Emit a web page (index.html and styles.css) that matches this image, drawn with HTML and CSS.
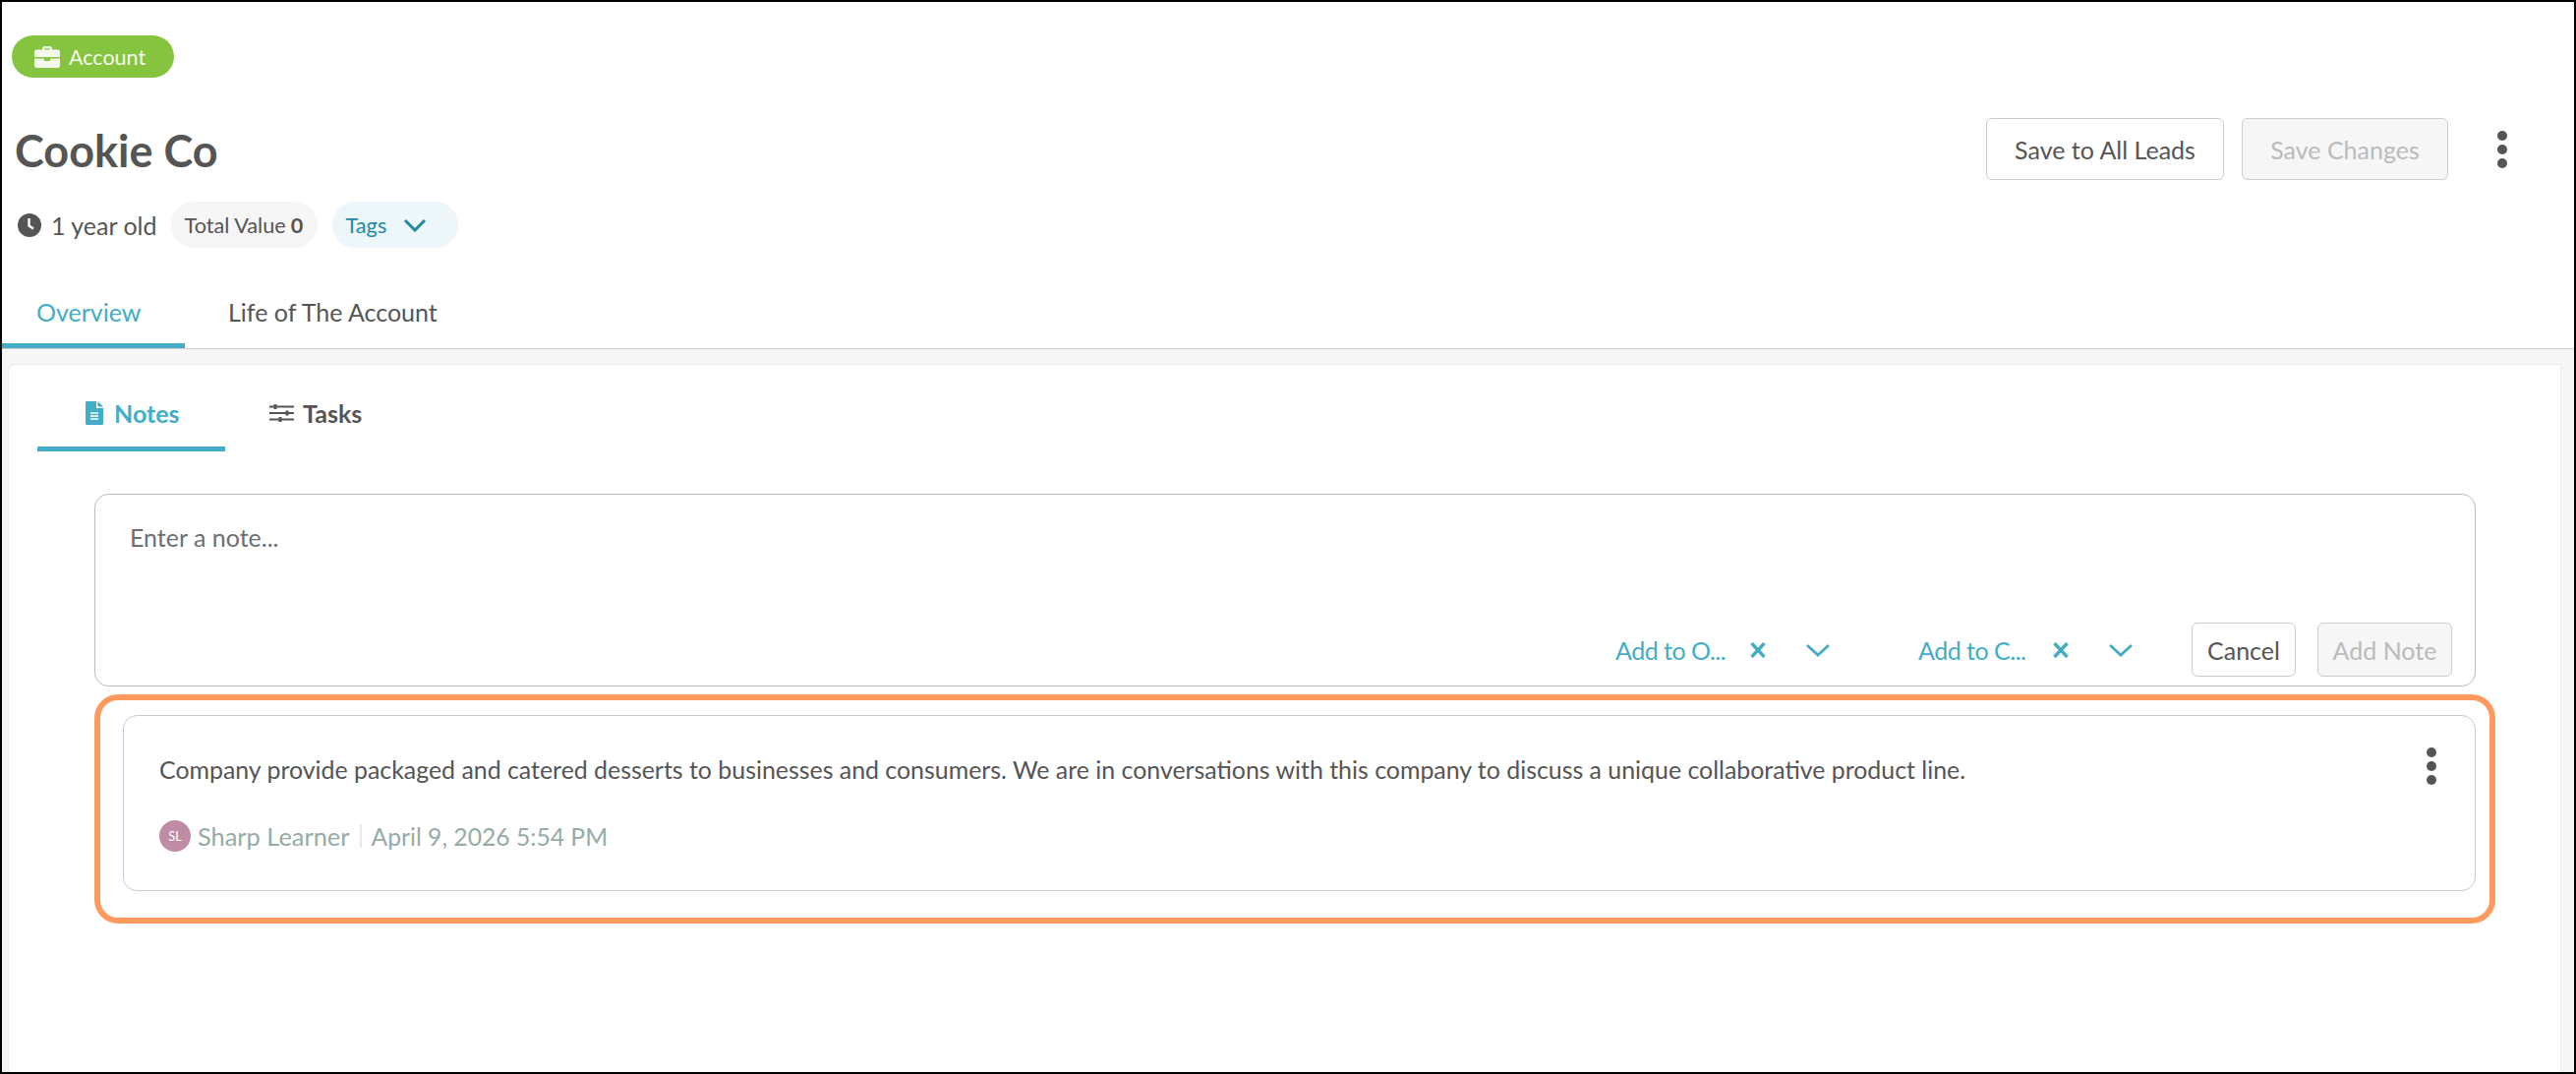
FILE: index.html
```html
<!DOCTYPE html>
<html lang="en">
<head>
<meta charset="utf-8">
<title>Cookie Co</title>
<link rel="stylesheet" href="styles.css">
</head>
<body>
<div class="frame">
  <header class="head">
    <div class="pill">
      <svg class="ic-case" viewBox="0 0 26 22"><path fill-rule="evenodd" d="M8 4V2.2C8 1 9 0 10.2 0h5.6C17 0 18 1 18 2.2V4h-2.2V2.2h-5.6V4z"/><path d="M2 3.5h22c1.1 0 2 .9 2 2V11H0V5.500c0-1.100.9-2 2-2z"/><path d="M0 12.500h10V15h6v-2.500h10V20c0 1.100-.9 2-2 2H2c-1.100 0-2-.9-2-2z"/></svg>
      <span>Account</span>
    </div>
    <div class="title-row">
      <div class="title-col">
        <h1 class="title">Cookie Co</h1>
        <div class="chips">
          <svg class="ic-clock" viewBox="0 0 24 24"><circle cx="12" cy="12" r="12" fill="#555"/><path d="M11.500 5v7.500l4.500 3" fill="none" stroke="#fff" stroke-width="2.400"/></svg>
          <span class="age">1 year old</span>
          <span class="chip chip-value">Total Value <b>0</b></span>
          <span class="chip chip-tags">Tags
            <svg class="ic-chev-tags" viewBox="0 0 24 14"><path d="M2 2l10 10L22 2" fill="none" stroke="currentColor" stroke-width="3"/></svg>
          </span>
        </div>
      </div>
      <div class="actions">
        <button class="btn btn-all">Save to All Leads</button>
        <button class="btn btn-off btn-save">Save Changes</button>
        <span class="dots dots-lg"><i></i><i></i><i></i></span>
      </div>
    </div>
    <nav class="tabs">
      <a class="tab tab-on">Overview</a>
      <a class="tab">Life of The Account</a>
    </nav>
  </header>
  <main class="canvas">
    <section class="panel">
      <div class="subtabs">
        <a class="subtab subtab-on">
          <svg class="ic-doc" viewBox="0 0 18 24"><path d="M0 1.200C0 .5.500 0 1.200 0H11v6.500c0 .3.200.5.500.5H18v15.800c0 .7-.5 1.200-1.200 1.200H1.200C.5 24 0 23.500 0 22.800z" fill="currentColor"/><path d="M12.500 0L18 5.500h-5.500z" fill="currentColor"/><path d="M5 12h8M5 15h8M5 18h8" stroke="#fff" stroke-width="1.300"/></svg>
          Notes
        </a>
        <a class="subtab subtab-off">
          <svg class="ic-sliders" viewBox="0 0 25 20"><path d="M0 3.500h25M0 10h25M0 16.500h25" stroke="currentColor" stroke-width="2.200"/><path d="M6 1v5M18 7.500v5M11 14v5" stroke="currentColor" stroke-width="3"/></svg>
          Tasks
        </a>
      </div>
      <div class="composer">
        <div class="placeholder">Enter a note...</div>
        <div class="composer-foot">
          <div class="picker">
            <span class="picker-label">Add to O...</span>
            <svg class="ic-x" viewBox="0 0 16 16"><path d="M1.500 1l13 14M14.500 1l-13 14" fill="none" stroke="currentColor" stroke-width="3.400"/></svg>
            <svg class="ic-chev" viewBox="0 0 26 14"><path d="M2 2l11 10L24 2" fill="none" stroke="currentColor" stroke-width="2.800"/></svg>
          </div>
          <div class="picker">
            <span class="picker-label">Add to C...</span>
            <svg class="ic-x" viewBox="0 0 16 16"><path d="M1.500 1l13 14M14.500 1l-13 14" fill="none" stroke="currentColor" stroke-width="3.400"/></svg>
            <svg class="ic-chev" viewBox="0 0 26 14"><path d="M2 2l11 10L24 2" fill="none" stroke="currentColor" stroke-width="2.800"/></svg>
          </div>
          <button class="btn btn-small btn-cancel">Cancel</button>
          <button class="btn btn-small btn-off btn-add">Add Note</button>
        </div>
      </div>
      <div class="highlight">
        <article class="note">
          <div class="note-body">
            <p class="note-text">Company provide packaged and catered desserts to businesses and consumers. We are in conversations with this company to discuss a unique collaborative product line.</p>
            <span class="dots"><i></i><i></i><i></i></span>
          </div>
          <div class="note-meta">
            <span class="avatar">SL</span>
            <span class="meta-name">Sharp Learner</span>
            <span class="sep"></span>
            <span class="meta-date">April 9, 2026 5:54 PM</span>
          </div>
        </article>
      </div>
    </section>
  </main>
</div>
</body>
</html>
```
FILE: styles.css
```css
* { box-sizing: border-box; }
html, body { margin: 0; height: 100%; }
body { font-family: Lato, "Open Sans", sans-serif; color: #555; background: #fff; }
.frame { width: 2620px; height: 1092px; border: 2px solid #000; display: flex; flex-direction: column; overflow: hidden; }

.head { flex: none; height: 353px; padding-top: 34px; border-bottom: 1px solid #ccc; display: flex; flex-direction: column; }
.pill { width: 165px; height: 43px; margin-left: 10px; border-radius: 22px; background: #86c440; color: #f4f9ee; display: flex; align-items: center; gap: 9px; padding-left: 23px; font-size: 21.5px; }
.ic-case { width: 26px; height: 22px; fill: #f2f8ea; }

.title-row { display: flex; justify-content: space-between; align-items: flex-start; }
.title { margin: 46px 0 0 13px; font-size: 45px; line-height: 56px; font-weight: 700; color: #555; }
.chips { display: flex; align-items: center; margin: 24px 0 0 16px; height: 47px; }
.ic-clock { width: 24px; height: 24px; margin-right: 10px; }
.age { font-size: 25px; margin-right: 14px; }
.chip { height: 47px; border-radius: 24px; display: flex; align-items: center; font-size: 21.7px; }
.chip b { margin-left: 5px; }
.chip-value { width: 149px; background: #f6f6f6; padding-left: 14px; margin-right: 15px; white-space: nowrap; }
.chip-tags { width: 128px; background: #edf6f9; color: #1f8aa5; padding-left: 14px; }
.ic-chev-tags { width: 24px; height: 14px; margin-left: 17px; }

.actions { display: flex; align-items: center; margin-top: 41px; }
.btn { font-family: inherit; font-size: 25px; border: 1px solid #ccc; border-radius: 6px; background: #fff; color: #555; padding: 0; height: 63px; white-space: nowrap; }
.btn-all { width: 242px; }
.btn-off { background: #f6f6f6; color: #bbb; }
.btn-save { width: 210px; margin-left: 18px; }
.dots { display: flex; flex-direction: column; gap: 4px; flex: none; }
.dots i { display: block; width: 10px; height: 10px; border-radius: 50%; background: #555; }
.dots-lg { margin: 0 68px 0 50px; }

.tabs { display: flex; margin-top: auto; }
.tab { height: 64px; font-size: 25px; display: flex; align-items: center; padding-bottom: 10px; }
.tab:first-child { width: 186px; padding-left: 35px; color: #43adc6; border-bottom: 5px solid #43adc6; padding-bottom: 5px; }
.tab:last-child { padding-left: 44px; }

.canvas { flex: 1; min-height: 0; background: #f6f6f6; padding: 15px 13px 0 6px; }
.panel { height: 100%; background: #fff; border: 1px solid #ececec; border-bottom: 0; border-top-left-radius: 8px; padding: 0 87px 0 87px; }

.subtabs { display: flex; margin: 0 0 43px -58px; height: 88px; }
.subtab { font-size: 25px; font-weight: 700; display: flex; align-items: center; height: 88px; }
.subtab-on { width: 191px; padding: 14px 0 0 49px; color: #43adc6; border-bottom: 5px solid #43adc6; }
.subtab-off { padding: 14px 0 5px 45px; }
.ic-doc { width: 18px; height: 24px; margin-right: 11px; }
.ic-sliders { width: 25px; height: 20px; margin-right: 9px; }

.composer { width: 2422px; height: 196px; border: 1px solid #bbb; border-radius: 14px; padding: 29px 23px 9px 35px; display: flex; flex-direction: column; justify-content: space-between; }
.placeholder { font-size: 25px; line-height: 28px; color: #6f6f6f; }
.composer-foot { display: flex; align-items: center; justify-content: flex-end; }
.picker { display: flex; align-items: center; color: #43adc6; font-size: 25px; }
.picker-label { width: 137px; white-space: nowrap; overflow: hidden; letter-spacing: -0.5px; }
.ic-x { width: 16px; height: 16px; margin-right: 40px; }
.ic-chev { width: 26px; height: 14px; margin-right: 89px; }
.picker:nth-child(2) .ic-chev { margin-right: 59px; }
.btn-small { height: 55px; }
.btn-cancel { width: 106px; }
.btn-add { width: 137px; margin-left: 22px; }

.highlight { width: 2442px; height: 233px; margin-top: 8px; border: 6px solid #ff9a5e; border-radius: 24px; padding: 15px 14px 0 23px; }
.note { height: 179px; border: 1px solid #ccc; border-radius: 14px; padding: 26px 39px 0 36px; }
.note-body { display: flex; justify-content: space-between; align-items: flex-start; }
.note-text { margin: 13px 0 0; font-size: 24.9px; line-height: 30px; color: #555; }
.note-body .dots { margin-top: 6px; }
.note-meta { display: flex; align-items: center; margin-top: 36px; color: #95aba8; font-size: 25px; }
.meta-name { font-size: 25.4px; }
.meta-date { font-size: 24.7px; }
.avatar { width: 32px; height: 32px; border-radius: 50%; background: #c08ba4; color: #fff; font-size: 13px; display: flex; align-items: center; justify-content: center; margin-right: 7px; }
.sep { width: 2px; height: 24px; background: #e8e8e8; margin: 0 10px; }
```
